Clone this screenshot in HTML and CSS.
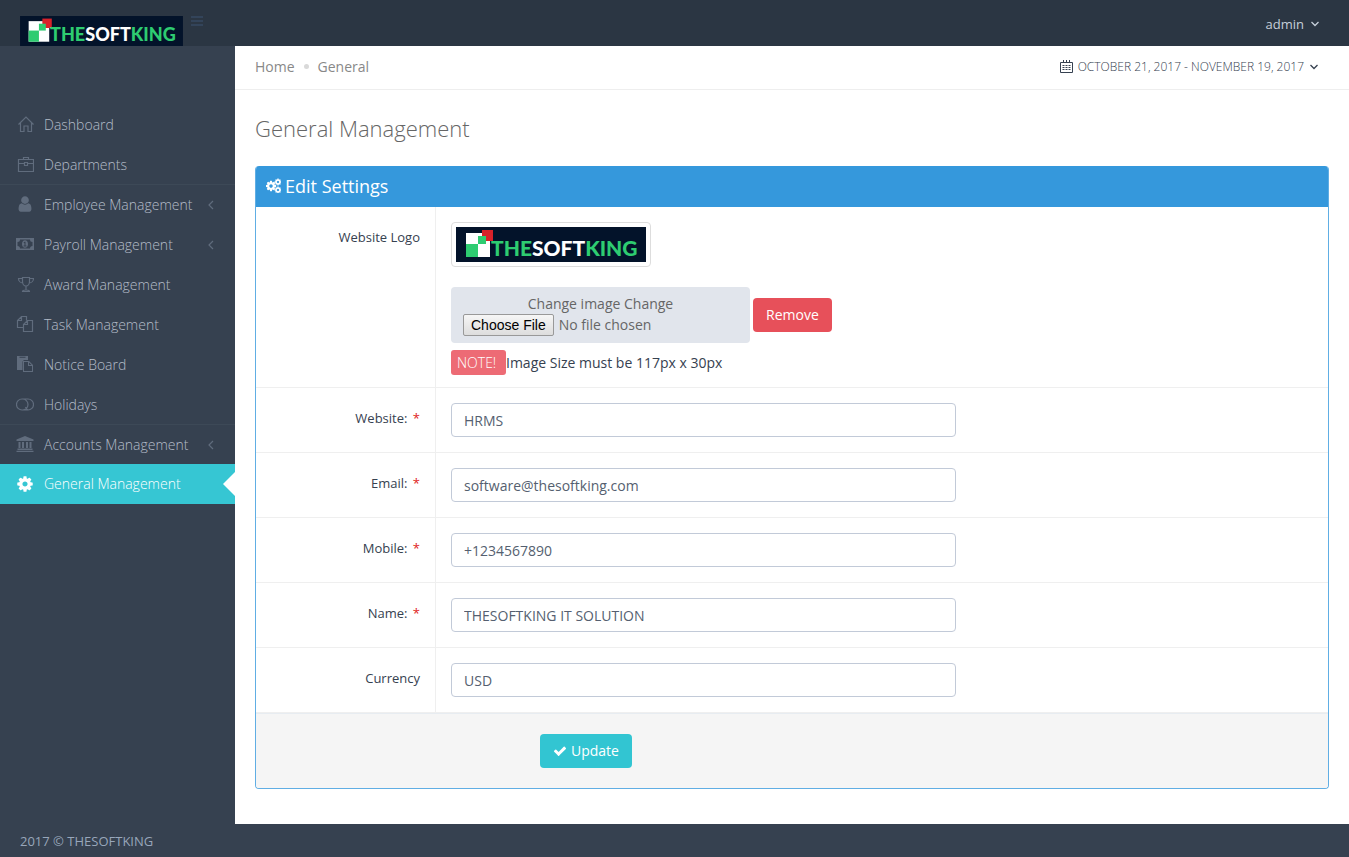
FILE: index.html
```html
<!DOCTYPE html>
<html lang="en">
<head>
  <meta charset="UTF-8">
  <meta name="viewport" content="width=device-width, initial-scale=1.0">
  <title>General Management</title>
  <link rel="stylesheet" href="styles.css">
</head>
<body>
  <svg class="sprite" aria-hidden="true">
    <symbol id="brand" viewBox="0 0 190 35" overflow="visible">
      <rect width="190" height="35" fill="#03132a"/>
      <rect x="10" y="6" width="24" height="24" fill="#fff"/>
      <rect x="10" y="17" width="12" height="13" fill="#2ecc71"/>
      <rect x="26" y="3" width="11" height="11" fill="#d8222a"/>
      <rect x="22" y="9" width="8" height="8" fill="#2ecc71"/>
      <text class="brand-text" x="35" y="29" fill="#2ecc71">THE<tspan fill="#fff">SOFT</tspan>KING</text>
    </symbol>
    <symbol id="cog" viewBox="0 0 1792 1792">
      <path d="M1152 896q0-106-75-181t-181-75-181 75-75 181 75 181 181 75 181-75 75-181zm512-109v222q0 12-8 23t-20 13l-185 28q-19 54-39 91 35 50 107 138 10 12 10 25t-9 23q-27 37-99 108t-94 71q-12 0-26-9l-138-108q-44 23-91 38-16 136-29 186-7 28-36 28h-222q-14 0-24.5-8.5t-11.5-21.5l-28-184q-49-16-90-37l-141 107q-10 9-25 9-14 0-25-11-126-114-165-168-7-10-7-23 0-12 8-23 15-21 51-66.5t54-70.5q-27-50-41-99l-183-27q-13-2-21-12.5t-8-23.5v-222q0-12 8-23t19-13l186-28q14-46 39-92-40-57-107-138-10-12-10-24 0-10 9-23 26-36 98.5-107.5t94.5-71.5q13 0 26 10l138 107q44-23 91-38 16-136 29-186 7-28 36-28h222q14 0 24.5 8.5t11.5 21.5l28 184q49 16 90 37l142-107q9-9 24-9 13 0 25 10 129 119 165 170 7 8 7 22 0 12-8 23-15 21-51 66.5t-54 70.5q26 50 41 98l183 28q13 2 21 12.5t8 23.5z"/>
    </symbol>
    <symbol id="left" viewBox="0 0 6 10">
      <path d="M5 1L1 5l4 4" fill="none" stroke="currentColor" stroke-width="1.2"/>
    </symbol>
    <symbol id="down" viewBox="0 0 10 6">
      <path d="M1.500 1L5 4.500 8.500 1" fill="none" stroke="currentColor" stroke-width="1.300"/>
    </symbol>
  </svg>

  <header class="header">
    <a class="logo" href="#"><svg class="logo-img" role="img" aria-label="THESOFTKING"><use href="#brand"/></svg></a>
    <button class="toggler" type="button" aria-label="Toggle menu"><span></span><span></span><span></span></button>
    <a class="user" href="#">admin <svg class="down"><use href="#down"/></svg></a>
  </header>

  <div class="wrapper">
    <nav class="sidebar">
      <ul>
        <li><a href="#">
          <svg class="icon line" viewBox="0 0 18 18"><path d="M2.500 9.500L10 2l7.500 7.500M4.500 8v8.500H8v-5.500h4v5.500h3.500V8"/></svg>
          Dashboard</a></li>
        <li><a href="#">
          <svg class="icon line" viewBox="0 0 18 18"><path d="M2.500 4.500h15v12h-15zM7.500 4.500v-2h5v2M2.500 8.500h6M11.500 8.500h6M8.500 7.500h3v3h-3z"/></svg>
          Departments</a></li>
        <li class="divided"><a href="#">
          <svg class="icon" viewBox="0 0 1792 1792"><path d="M1536 1399q0 109-62.5 187t-150.5 78h-854q-88 0-150.5-78t-62.5-187q0-85 8.5-160.5t31.5-152 58.5-131 94-89 134.5-34.5q131 128 313 128t313-128q76 0 134.5 34.5t94 89 58.5 131 31.5 152 8.5 160.5zm-256-887q0 159-112.5 271.5t-271.5 112.5-271.5-112.5-112.5-271.5 112.5-271.5 271.5-112.5 271.5 112.5 112.5 271.5z"/></svg>
          Employee Management <svg class="arrow"><use href="#left"/></svg></a></li>
        <li><a href="#">
          <svg class="icon" viewBox="0 0 18 18"><path fill-rule="evenodd" d="M0 3h18v12H0zM4 4.500a2.500 2.500 0 0 1-2.500 2.500v4A2.500 2.500 0 0 1 4 13.500h10a2.500 2.500 0 0 1 2.500-2.500V7A2.500 2.500 0 0 1 14 4.500zM9 5.300c1.800 0 3 1.600 3 3.700s-1.200 3.700-3 3.700S6 11.100 6 9s1.200-3.700 3-3.700zM7.500 7.600l.6.7.4-.3v2.500h-1v.9h3v-.9h-1V6.700h-.9z"/></svg>
          Payroll Management <svg class="arrow"><use href="#left"/></svg></a></li>
        <li><a href="#">
          <svg class="icon line" viewBox="0 0 18 18"><path d="M6.500 2.500h7v4c0 2.500-1.500 4.500-3.500 4.500s-3.500-2-3.500-4.500zM6.500 3.500h-4c0 2.500 2 4.500 4.500 4.500M13.500 3.500h4c0 2.500-2 4.500-4.500 4.500M10 11v4M6.500 16.500c0-1 1-1.500 3.500-1.500s3.500.5 3.500 1.500z"/></svg>
          Award Management</a></li>
        <li><a href="#">
          <svg class="icon line" viewBox="0 0 18 18"><path d="M7.500 12.500h-6V5.500l4-4h5v4M5.500 1.500v4h-4M7.500 9.500l4-4h5v11h-9zM11.500 5.500v4h-4"/></svg>
          Task Management</a></li>
        <li><a href="#">
          <svg class="icon" viewBox="0 0 18 18"><path fill-rule="evenodd" d="M1 1h11v4H8L6.500 6.500V15H1zM3.500 1.800v1h6v-1zM7 6h6l4 4v7H7zM8 7v9h8v-5h-4V7zM13 7.500V10h2.500z"/></svg>
          Notice Board</a></li>
        <li><a href="#">
          <svg class="icon line" viewBox="0 0 18 18"><path d="M6 4h6a5 5 0 0 1 0 11H6A5 5 0 0 1 6 4M6.500 4a5.500 5.500 0 0 1 0 11M12 15a5.500 5.500 0 0 1-2.500-3"/></svg>
          Holidays</a></li>
        <li class="divided"><a href="#">
          <svg class="icon" viewBox="0 0 18 18"><path d="M9 1l8.500 3.500V6H.5V4.500zM2.500 7h2v6h-2zM6 7h2v6H6zM10 7h2v6h-2zM13.500 7h2v6h-2zM1.500 13.500h15V15h-15zM.5 15.700h17V17H.5z"/></svg>
          Accounts Management <svg class="arrow"><use href="#left"/></svg></a></li>
        <li class="active"><a href="#">
          <svg class="icon"><use href="#cog"/></svg>
          General Management</a></li>
      </ul>
    </nav>

    <main class="content">
      <div class="page-bar">
        <div class="breadcrumb">
          <a href="#">Home</a>
          <i class="dot"></i>
          <span>General</span>
        </div>
        <button class="date-range" type="button">
          <svg class="calendar" viewBox="0 0 13 13"><path d="M.5 2.500h12v10H.5zM3.500 0v3M6.500 0v3M9.500 0v3" fill="none" stroke="currentColor"/><path d="M2.500 5.500h8M2.500 7.500h8M2.500 9.500h8" fill="none" stroke="currentColor" stroke-dasharray="2 1"/></svg>
          October 21, 2017 - November 19, 2017
          <svg class="down"><use href="#down"/></svg>
        </button>
      </div>

      <h1>General Management</h1>

      <form class="portlet">
        <h2>
          <svg class="cogs" viewBox="0 0 15 15"><use href="#cog" x="-1" y="2" width="12" height="12"/><use href="#cog" x="8" y="0" width="8" height="8"/><use href="#cog" x="8" y="8" width="8" height="8"/></svg>
          Edit Settings
        </h2>

        <div class="row">
          <label for="logo">Website Logo</label>
          <div class="field">
            <div class="thumbnail"><svg class="thumb-img" role="img" aria-label="THESOFTKING"><use href="#brand"/></svg></div>
            <div class="upload">
              <div class="file-box">
                <span>Change image Change</span>
                <input type="file" id="logo">
              </div>
              <button class="btn red" type="button">Remove</button>
            </div>
            <div class="note"><span class="tag">NOTE!</span>Image Size must be 117px x 30px</div>
          </div>
        </div>
        <div class="row">
          <label for="website">Website: <span class="required">*</span></label>
          <div class="field"><input type="text" id="website" value="HRMS"></div>
        </div>
        <div class="row">
          <label for="email">Email: <span class="required">*</span></label>
          <div class="field"><input type="text" id="email" value="software@thesoftking.com"></div>
        </div>
        <div class="row">
          <label for="mobile">Mobile: <span class="required">*</span></label>
          <div class="field"><input type="text" id="mobile" value="+1234567890"></div>
        </div>
        <div class="row">
          <label for="name">Name: <span class="required">*</span></label>
          <div class="field"><input type="text" id="name" value="THESOFTKING IT SOLUTION"></div>
        </div>
        <div class="row">
          <label for="currency">Currency</label>
          <div class="field"><input type="text" id="currency" value="USD"></div>
        </div>

        <div class="actions">
          <button class="btn green" type="submit">
            <svg class="check" viewBox="0 0 1792 1792"><path d="M1671 566q0 40-28 68l-724 724-136 136q-28 28-68 28t-68-28l-136-136-362-362q-28-28-28-68t28-68l136-136q28-28 68-28t68 28l294 295 656-657q28-28 68-28t68 28l136 136q28 28 28 68z"/></svg>
            Update
          </button>
        </div>
      </form>
    </main>
  </div>

  <footer class="footer">2017 © THESOFTKING</footer>
</body>
</html>
```
FILE: styles.css
```css
*, *::before, *::after {
  box-sizing: border-box;
}
body {
  margin: 0;
  min-height: 100vh;
  display: flex;
  flex-direction: column;
  background: #364150;
  color: #333;
  font-family: "Open Sans", sans-serif;
  font-size: 14px;
  line-height: 20px;
}
a {
  color: inherit;
  text-decoration: none;
}
button, input {
  font: inherit;
  color: inherit;
}
button {
  cursor: pointer;
}
svg {
  fill: currentColor;
  flex-shrink: 0;
}
.sprite {
  position: absolute;
  width: 0;
  height: 0;
}
.brand-text {
  font-family: Lato, sans-serif;
  font-size: 21px;
  font-weight: 900;
}

/* header */
.header {
  display: flex;
  align-items: flex-start;
  height: 46px;
  padding: 0 29px 0 20px;
  background: #2b3643;
}
.logo {
  padding-top: 16px;
}
.logo-img, .thumb-img {
  display: block;
  overflow: visible;
}
.logo-img {
  width: 163px;
  height: 30px;
}
.toggler {
  display: flex;
  flex-direction: column;
  gap: 2px;
  margin: 16px 0 0 8px;
  padding: 0;
  border: 0;
  background: none;
}
.toggler span {
  width: 12px;
  height: 2px;
  background: #33445a;
}
.user {
  display: flex;
  align-items: center;
  gap: 6px;
  margin-left: auto;
  padding-top: 14px;
  color: #c6cfda;
  font-size: 13px;
}
.down {
  width: 10px;
  height: 6px;
}

/* sidebar */
.wrapper {
  flex: 1;
  display: flex;
}
.sidebar {
  width: 235px;
  flex-shrink: 0;
  padding-top: 58px;
}
.sidebar ul {
  list-style: none;
  margin: 0;
  padding: 0;
}
.sidebar a {
  display: flex;
  align-items: center;
  height: 40px;
  padding: 0 21px 0 16px;
  border-top: 1px solid transparent;
  color: #b4bcc8;
  font-weight: 300;
}
.sidebar .divided a {
  border-top-color: #3d4957;
}
.icon {
  width: 18px;
  height: 18px;
  margin: -1px 10px 0 0;
  color: #606c7d;
}
.line {
  fill: none;
  stroke: currentColor;
  stroke-width: 1.2;
}
.arrow {
  width: 6px;
  height: 10px;
  margin-left: auto;
  color: #606c7d;
}
.active {
  position: relative;
}
.sidebar .active a {
  border-top: 0;
  background: #36c6d3;
  color: #fff;
}
.active .icon {
  color: #fff;
}
.active::after {
  content: "";
  position: absolute;
  top: 8px;
  right: 0;
  border: 12px solid transparent;
  border-left: 0;
  border-right-color: #fff;
}

/* content */
.content {
  flex: 1;
  min-width: 0;
  padding-bottom: 35px;
  background: #fff;
}
.page-bar {
  display: flex;
  justify-content: space-between;
  align-items: center;
  height: 44px;
  padding: 0 30px 2px 20px;
  border-bottom: 1px solid #eee;
}
.breadcrumb {
  display: flex;
  align-items: center;
  gap: 9px;
  color: #888;
}
.dot {
  width: 5px;
  height: 5px;
  border-radius: 50%;
  background: #d9d9d9;
}
.date-range {
  display: flex;
  align-items: center;
  gap: 5px;
  padding: 0;
  border: 0;
  background: none;
  color: #364150;
  font-size: 12px;
  font-weight: 300;
  text-transform: uppercase;
}
.calendar {
  width: 13px;
  height: 13px;
}
h1 {
  margin: 24px 20px;
  color: #666;
  font-size: 22px;
  font-weight: 300;
  line-height: 28px;
}

/* settings form */
.portlet {
  margin: 0 20px;
  border: 1px solid #60aee4;
  border-top: 0;
  border-radius: 4px;
  overflow: hidden;
}
.portlet h2 {
  display: flex;
  align-items: center;
  gap: 4px;
  height: 41px;
  margin: 0;
  padding: 0 10px 2px;
  background: #3598dc;
  color: #fff;
  font-size: 18px;
  font-weight: 400;
}
.cogs {
  width: 15px;
  height: 15px;
}
.row {
  display: flex;
  border-bottom: 1px solid #efefef;
}
.row label {
  width: 179px;
  flex-shrink: 0;
  padding: 20px 15px 0 0;
  color: #364150;
  font-size: 13px;
  text-align: right;
}
.required {
  margin-left: 2px;
  color: #e02222;
}
.field {
  flex: 1;
  padding: 15px;
  border-left: 1px solid #efefef;
}
.field input[type="text"] {
  display: block;
  width: 100%;
  max-width: 505px;
  height: 34px;
  padding: 6px 12px;
  border: 1px solid #c2cad8;
  border-radius: 4px;
  background: #fff;
  color: #555f70;
}
.thumbnail {
  width: 200px;
  padding: 4px;
  border: 1px solid #ddd;
  border-radius: 4px;
}
.thumb-img {
  width: 190px;
  height: 35px;
}
.upload {
  display: flex;
  align-items: center;
  gap: 3px;
  margin-top: 20px;
}
.file-box {
  display: flex;
  flex-direction: column;
  width: 299px;
  padding: 7px 12px;
  border-radius: 4px;
  background: #e1e5ec;
  color: #666;
  text-align: center;
}
.file-box input {
  width: 100%;
  height: 22px;
}
.file-box input::file-selector-button {
  height: 22px;
  margin-right: 5px;
  padding: 0 7px;
  border: 1px solid #999;
  border-radius: 2px;
  background: linear-gradient(#f6f6f6, #ddd);
  color: #000;
  font-family: "Liberation Sans", sans-serif;
  font-size: 14px;
}
.btn {
  display: inline-flex;
  align-items: center;
  gap: 4px;
  height: 34px;
  padding: 0 13px;
  border: 0;
  border-radius: 4px;
  color: #fff;
}
.red {
  background: #e7505a;
}
.green {
  background: #32c5d2;
}
.note {
  display: flex;
  align-items: center;
  height: 25px;
  margin: 7px 0 -3px;
  color: #364150;
}
.tag {
  width: 55px;
  padding: 0 6px;
  border-radius: 3px;
  background: #ed6b75;
  color: #fff;
  font-weight: 300;
  line-height: 25px;
}
.actions {
  padding: 20px 20px 20px 284px;
  border-top: 1px solid #e7ecf1;
  background: #f5f5f5;
}
.check {
  width: 14px;
  height: 14px;
}

.footer {
  height: 33px;
  padding: 8px 20px;
  color: #98a6ba;
  font-size: 13px;
  line-height: 18px;
}
```
